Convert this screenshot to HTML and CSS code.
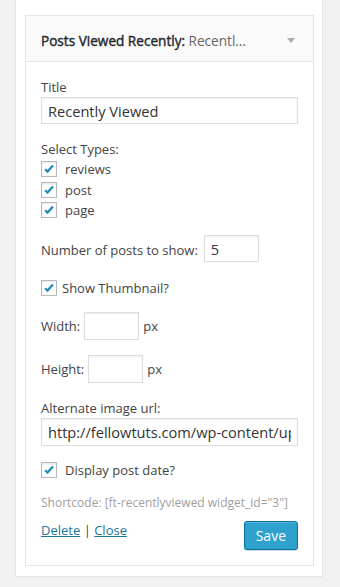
FILE: index.html
```html
<!DOCTYPE html>
<html lang="en">
<head>
  <meta charset="UTF-8">
  <meta name="viewport" content="width=device-width, initial-scale=1.0">
  <title>Widget</title>
  <link rel="stylesheet" href="styles.css">
</head>
<body>
  <div class="sidebar">
    <div class="widget">
      <div class="widget-top">
        <h3><strong>Posts Viewed Recently:</strong> <span class="in-title">Recentl…</span></h3>
        <span class="toggle"></span>
      </div>
      <div class="widget-inside">
        <div class="field">
          <label>Title</label>
          <input type="text" class="wide" value="Recently Viewed">
        </div>
        <div class="field types-field">
          <label>Select Types:</label>
          <ul class="types">
            <li><span class="check"><svg viewBox="0 0 16 16"><path d="M3.6 8.2l2.7 2.8 6.2-7" /></svg></span>reviews</li>
            <li><span class="check"><svg viewBox="0 0 16 16"><path d="M3.6 8.2l2.7 2.8 6.2-7" /></svg></span>post</li>
            <li><span class="check"><svg viewBox="0 0 16 16"><path d="M3.6 8.2l2.7 2.8 6.2-7" /></svg></span>page</li>
          </ul>
        </div>
        <div class="field inline count-field">
          <label class="low">Number of posts to show:</label>
          <input type="text" class="small count" value="5">
        </div>
        <div class="field inline thumb-field">
          <span class="check"><svg viewBox="0 0 16 16"><path d="M3.6 8.2l2.7 2.8 6.2-7" /></svg></span>
          <label>Show Thumbnail?</label>
        </div>
        <div class="field inline width-field">
          <label>Width:</label>
          <input type="text" class="small">
          <span>px</span>
        </div>
        <div class="field inline height-field">
          <label>Height:</label>
          <input type="text" class="small">
          <span>px</span>
        </div>
        <div class="field url-field">
          <label>Alternate image url:</label>
          <input type="text" class="wide url" value="http://fellowtuts.com/wp-content/uploads/">
        </div>
        <div class="field inline date-field">
          <span class="check"><svg viewBox="0 0 16 16"><path d="M3.6 8.2l2.7 2.8 6.2-7" /></svg></span>
          <label>Display post date?</label>
        </div>
        <p class="shortcode">Shortcode: [ft-recentlyviewed widget_id="3"]</p>
        <div class="actions">
          <div class="links"><a href="#">Delete</a> | <a href="#">Close</a></div>
          <button class="save">Save</button>
        </div>
      </div>
    </div>
  </div>
</body>
</html>
```

FILE: styles.css
```css
* {
  margin: 0;
  padding: 0;
  box-sizing: border-box;
}

body {
  background-color: #f1f1f1;
  color: #444;
  font-family: "Open Sans", sans-serif;
  font-size: 13px;
  line-height: 20px;
}

.sidebar {
  width: 308px;
  margin-left: 15px;
  padding: 15px 8px 10px 9px;
  background-color: #fff;
  box-shadow: 0 1px 1px rgba(0, 0, 0, 0.04);
  border: 1px solid #e5e5e5;
  border-top: none;
}

.widget {
  border: 1px solid #e5e5e5;
  background-color: #fff;
}

.widget-top {
  display: flex;
  align-items: center;
  justify-content: space-between;
  height: 46px;
  padding: 4px 15px 0;
  background-color: #fafafa;
  border-bottom: 1px solid #e5e5e5;
}

.widget-top h3 {
  font-size: 13.6px;
  font-weight: 400;
  color: #23282d;
  white-space: nowrap;
}

.widget-top strong {
  font-weight: 400;
  -webkit-text-stroke: 0.4px #23282d;
}

.widget-top .in-title {
  color: #666;
}

.toggle {
  width: 0;
  height: 0;
  margin-right: 3px;
  border-left: 4px solid transparent;
  border-right: 4px solid transparent;
  border-top: 5px solid #aaa;
}

.widget-inside {
  padding: 15px;
}

/* fields */
.field label {
  display: block;
}

.field.inline {
  display: flex;
  align-items: center;
  gap: 4px;
}

.field.inline label {
  display: inline;
}

.field.inline label.low {
  padding-top: 3px;
}

.types-field {
  margin-top: 15px;
}

.count-field {
  margin-top: 14.5px;
}

.thumb-field {
  margin-top: 16px;
  height: 20px;
}

.thumb-field label {
  margin-left: -3px;
}

.width-field {
  margin-top: 14px;
}

.height-field {
  margin-top: 15px;
}

.url-field {
  margin-top: 15px;
}

.date-field {
  margin-top: 14px;
  height: 20px;
}

input[type="text"] {
  font-family: "Open Sans", sans-serif;
  font-size: 14.6px;
  color: #333;
  height: 28px;
  padding: 2px 6px;
  border: 1px solid #ddd;
  box-shadow: inset 0 1px 2px rgba(0, 0, 0, 0.07);
  background-color: #fff;
  outline: none;
}

input.wide {
  width: 100%;
  height: 27px;
}

input.wide.url {
  height: 28px;
}

input.small {
  width: 55px;
}

input.count {
  height: 27px;
  margin-left: 2px;
}

.types {
  list-style: none;
}

.types li {
  display: flex;
  align-items: center;
  height: 20.5px;
}

.check {
  display: inline-block;
  flex: none;
  width: 16px;
  height: 16px;
  margin-right: 8px;
  border: 1px solid #b4b9be;
  background-color: #fff;
  box-shadow: inset 0 1px 2px rgba(0, 0, 0, 0.1);
}

.check svg {
  display: block;
  width: 14px;
  height: 14px;
  fill: none;
  stroke: #1e8cbe;
  stroke-width: 2.6;
}

.field.inline .check {
  margin-right: 4px;
}

.shortcode {
  font-size: 12px;
  line-height: 17px;
  color: #a0a0a0;
  margin: 13.5px 0 9.5px;
}

.actions {
  display: flex;
  justify-content: space-between;
  align-items: flex-start;
}

.links a {
  color: #21759b;
}

.save {
  font-family: "Open Sans", sans-serif;
  font-size: 14px;
  color: #fff;
  height: 29px;
  padding: 0 11px;
  margin-top: 1px;
  background-color: #2ea2cc;
  border: 1px solid #0074a2;
  border-radius: 3px;
  box-shadow: inset 0 1px 0 rgba(120, 200, 230, 0.5), 0 1px 0 rgba(0, 0, 0, 0.15);
  cursor: pointer;
}
```
